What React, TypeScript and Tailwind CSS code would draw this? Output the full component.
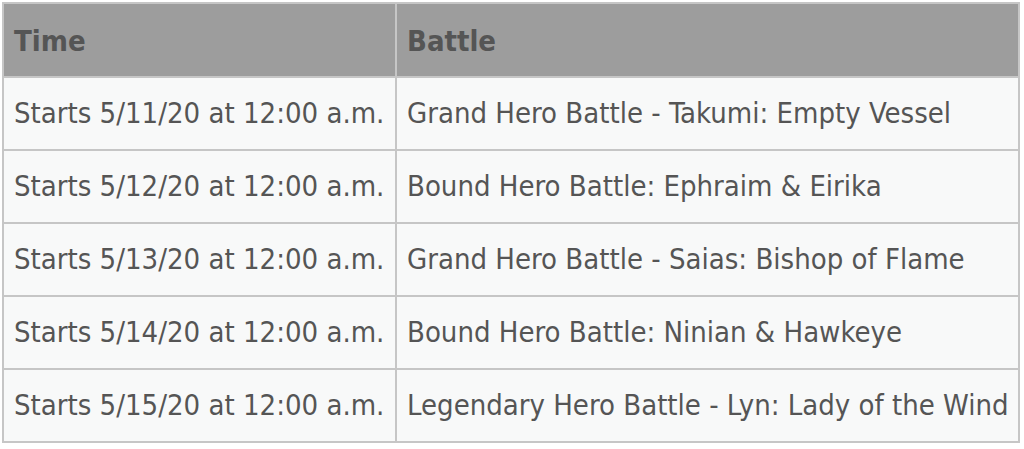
import React from 'react';

const rows = [
  { time: 'Starts 5/11/20 at 12:00 a.m.', battle: 'Grand Hero Battle - Takumi: Empty Vessel' },
  { time: 'Starts 5/12/20 at 12:00 a.m.', battle: 'Bound Hero Battle: Ephraim & Eirika' },
  { time: 'Starts 5/13/20 at 12:00 a.m.', battle: 'Grand Hero Battle - Saias: Bishop of Flame' },
  { time: 'Starts 5/14/20 at 12:00 a.m.', battle: 'Bound Hero Battle: Ninian & Hawkeye' },
  { time: 'Starts 5/15/20 at 12:00 a.m.', battle: 'Legendary Hero Battle - Lyn: Lady of the Wind' },
];

const App = () => {
  return (
    <div className="w-[1024px] h-[449px] bg-white pt-[2px] pl-[2px]" style={{ fontFamily: '"DejaVu Sans Condensed", "DejaVu Sans", sans-serif' }}>
      <table className="border-collapse border-2 border-[#c6c6c6] text-[29px] text-[#555555] w-[1018px] table-fixed">
        <thead>
          <tr className="bg-[#9d9d9d] h-[74px]">
            <th className="border-2 border-[#c6c6c6] text-left font-bold px-[10px] pt-[4px] w-[393px]">Time</th>
            <th className="border-2 border-[#c6c6c6] text-left font-bold px-[10px] pt-[4px]">Battle</th>
          </tr>
        </thead>
        <tbody>
          {rows.map((r) => (
            <tr key={r.time} className="bg-[#f8f9f9] h-[73px]">
              <td className="border-2 border-[#c6c6c6] px-[10px] whitespace-nowrap">{r.time}</td>
              <td className="border-2 border-[#c6c6c6] px-[10px] whitespace-nowrap">{r.battle}</td>
            </tr>
          ))}
        </tbody>
      </table>
    </div>
  );
};

export default App;
